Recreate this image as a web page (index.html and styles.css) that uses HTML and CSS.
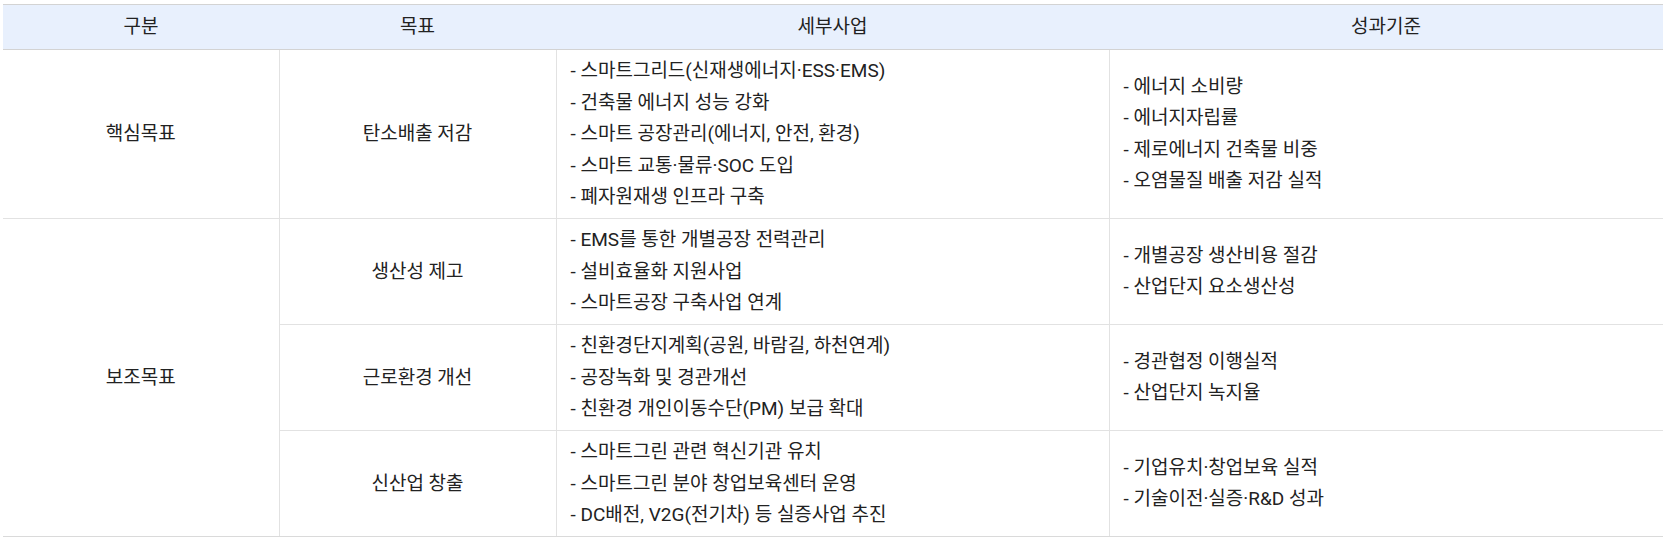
FILE: index.html
```html
<!DOCTYPE html>
<html lang="ko">
<head>
<meta charset="utf-8">
<title>목표 및 성과기준</title>
<link rel="stylesheet" href="styles.css">
</head>
<body>
<div class="wrap">
<table class="goals">
  <colgroup>
    <col class="c1"><col class="c2"><col class="c3"><col class="c4">
  </colgroup>
  <thead>
    <tr><th>구분</th><th>목표</th><th>세부사업</th><th>성과기준</th></tr>
  </thead>
  <tbody>
    <tr>
      <td class="center">핵심목표</td>
      <td class="center">탄소배출 저감</td>
      <td class="list">
        <p>- 스마트그리드(신재생에너지·ESS·EMS)</p>
        <p>- 건축물 에너지 성능 강화</p>
        <p>- 스마트 공장관리(에너지, 안전, 환경)</p>
        <p>- 스마트 교통·물류·SOC 도입</p>
        <p>- 폐자원재생 인프라 구축</p>
      </td>
      <td class="list">
        <p>- 에너지 소비량</p>
        <p>- 에너지자립률</p>
        <p>- 제로에너지 건축물 비중</p>
        <p>- 오염물질 배출 저감 실적</p>
      </td>
    </tr>
    <tr>
      <td class="center" rowspan="3">보조목표</td>
      <td class="center">생산성 제고</td>
      <td class="list">
        <p>- EMS를 통한 개별공장 전력관리</p>
        <p>- 설비효율화 지원사업</p>
        <p>- 스마트공장 구축사업 연계</p>
      </td>
      <td class="list">
        <p>- 개별공장 생산비용 절감</p>
        <p>- 산업단지 요소생산성</p>
      </td>
    </tr>
    <tr>
      <td class="center">근로환경 개선</td>
      <td class="list">
        <p>- 친환경단지계획(공원, 바람길, 하천연계)</p>
        <p>- 공장녹화 및 경관개선</p>
        <p>- 친환경 개인이동수단(PM) 보급 확대</p>
      </td>
      <td class="list">
        <p>- 경관협정 이행실적</p>
        <p>- 산업단지 녹지율</p>
      </td>
    </tr>
    <tr>
      <td class="center">신산업 창출</td>
      <td class="list">
        <p>- 스마트그린 관련 혁신기관 유치</p>
        <p>- 스마트그린 분야 창업보육센터 운영</p>
        <p>- DC배전, V2G(전기차) 등 실증사업 추진</p>
      </td>
      <td class="list">
        <p>- 기업유치·창업보육 실적</p>
        <p>- 기술이전·실증·R&amp;D 성과</p>
      </td>
    </tr>
  </tbody>
</table>
</div>
</body>
</html>
```

FILE: styles.css
```css
html, body {
  margin: 0;
  padding: 0;
  background: #ffffff;
}

.wrap {
  padding: 4px 10px 0 3px;
}

.goals {
  width: 1660px;
  border-collapse: collapse;
  table-layout: fixed;
  font-family: Roboto, "Noto Sans CJK KR", sans-serif;
  font-size: 19px;
  font-weight: 400;
  color: #222222;
}

.c1 { width: 276px; }
.c2 { width: 277px; }
.c3 { width: 553px; }
.c4 { width: 554px; }

.goals th {
  height: 44px;
  padding: 0;
  background: #e8f0fd;
  border-top: 1px solid #d3d3d3;
  border-bottom: 1px solid #d3d3d3;
  font-weight: 400;
  text-align: center;
  vertical-align: middle;
  line-height: 20px;
}

.goals td {
  padding: 5px 14px 5.5px;
  border: 1px solid #e2e2e2;
  vertical-align: middle;
  line-height: 31.5px;
}

.goals tbody tr:first-child td {
  border-top: none;
}

.goals td:first-child {
  border-left: none;
}

.goals td:last-child {
  border-right: none;
}

.goals tbody tr:last-child td,
.goals td[rowspan] {
  border-bottom: 1px solid #dadada;
}

.center {
  text-align: center;
}

.list {
  text-align: left;
}

.list p {
  margin: 0;
  height: 31.5px;
}
```
